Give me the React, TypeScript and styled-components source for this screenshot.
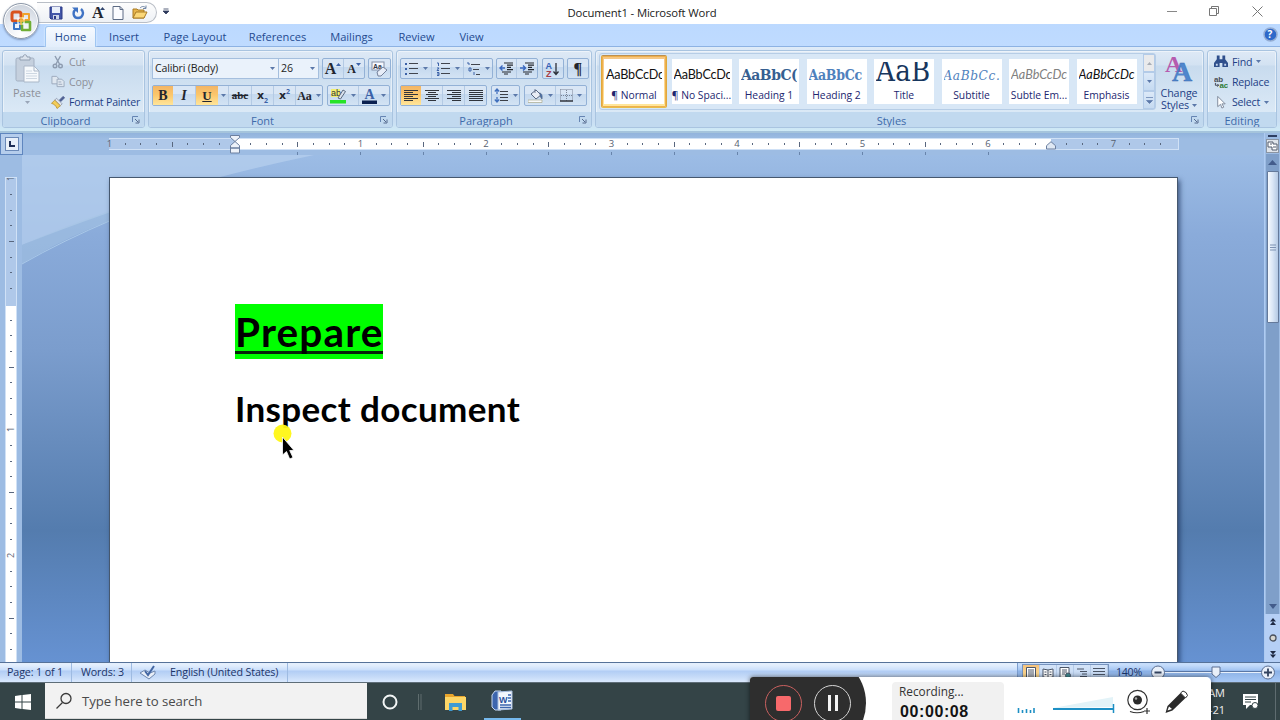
import type { ReactNode } from "react";
import styled, { createGlobalStyle, css } from "styled-components";

const GlobalStyle = createGlobalStyle`
  * {
    box-sizing: border-box;
  }
  body {
    margin: 0;
    overflow: hidden;
    font-family: "Open Sans", "Noto Sans", sans-serif;
    font-size: 11px;
    color: #15428b;
  }
`;

const Screen = styled.div`
  position: relative;
  width: 1280px;
  height: 720px;
  overflow: hidden;
  display: flex;
  flex-direction: column;
  background: #ffffff;
`;

const Row = styled.div<{ $gap?: number }>`
  display: flex;
  align-items: center;
  gap: ${(p) => p.$gap ?? 0}px;
`;

/* title bar */

const TitleBar = styled.header`
  height: 24px;
  flex: none;
  display: grid;
  grid-template-columns: 180px 1fr 180px;
  background: #ffffff;
`;

const QuickAccess = styled.div`
  display: flex;
  align-items: center;
  margin: 2px 0 1px 37px;
  width: 120px;
  height: 21px;
  padding-left: 12px;
  gap: 7.5px;
  border: 1px solid #b9bec6;
  border-left: 0;
  border-radius: 0 11px 11px 0;
  background: linear-gradient(#fdfdfd, #eef1f5);
`;

const QuickArea = styled.div`
  display: flex;
  align-items: flex-start;
`;

const QuickMore = styled.div`
  margin: 8px 0 0 6px;
  line-height: 0;
`;

const Title = styled.h1`
  margin: 0 0 0 4px;
  padding-top: 1px;
  text-align: center;
  font-size: 11.3px;
  letter-spacing: -0.14px;
  font-weight: 400;
  line-height: 24px;
  color: #1a1a1a;
`;

const WindowButtons = styled.div`
  display: flex;
  justify-content: flex-end;
  gap: 32px;
  padding: 6px 17px 0 0;
`;

const OfficeButton = styled.div`
  position: absolute;
  left: 3px;
  top: 3px;
  width: 36px;
  height: 36px;
  border-radius: 50%;
  border: 1px solid #8d98a8;
  background: radial-gradient(circle at 50% 90%, #ffffff 0, #e9edf3 45%, #c3cad5 100%);
  box-shadow: inset 0 0 0 1px #ffffff, 0 1px 2px rgba(60, 80, 120, 0.5);
  display: flex;
  align-items: center;
  justify-content: center;
`;

/* tabs */

const TabBar = styled.nav`
  height: 23px;
  flex: none;
  display: flex;
  background: linear-gradient(#bcd9ff, #bfdbff);
  padding-left: 45px;
  border-bottom: 1px solid #8db2e3;
`;

const Tab = styled.a<{ $active?: boolean; $w: number }>`
  width: ${(p) => p.$w}px;
  height: 23px;
  padding-top: 3px;
  line-height: 20px;
  text-align: center;
  font-size: 11.1px;
  color: #244a8f;
  ${(p) =>
    p.$active &&
    css`
      margin-top: 2px;
      height: 21px;
      padding-top: 0;
      border: 1px solid #9fc6f2;
      border-bottom: 0;
      border-radius: 3px 3px 0 0;
      background: linear-gradient(#f6faff, #e3eefb);
      box-shadow: 0 0 2px #f3ffff;
    `}
`;

const Help = styled.div`
  margin: 3px 2px 0 auto;
`;

/* ribbon */

const Ribbon = styled.section`
  height: 86px;
  flex: none;
  display: flex;
  gap: 3px;
  padding: 3px 3px 5px 2px;
  background: linear-gradient(#dfebf8 0, #cfdff1 18px, #c9def3 74px, #cfeaf6 84px);
  border-bottom: 2px solid #a5c4dc;
`;

const Group = styled.div<{ $w: number }>`
  width: ${(p) => p.$w}px;
  height: 78px;
  flex: none;
  display: flex;
  flex-direction: column;
  border: 1px solid #a9c4e0;
  border-radius: 3px;
  overflow: hidden;
  background: linear-gradient(#dee9f6 0, #d3e2f2 14px, #c8dbee 15px, #dbe9f6 62px);
  box-shadow: inset 0 0 0 1px rgba(255, 255, 255, 0.45);
`;

const GroupBody = styled.div<{ $pad?: number }>`
  flex: 1;
  min-height: 0;
  display: flex;
  padding-left: ${(p) => p.$pad ?? 0}px;
`;

const GroupLabel = styled.div<{ $launcher?: boolean }>`
  position: relative;
  height: 15px;
  flex: none;
  padding-right: ${(p) => (p.$launcher ? 16 : 0)}px;
  text-align: center;
  line-height: 17px;
  color: #3e6aaa;
  background: #c1d9ef;
`;

const Launcher = styled.span`
  position: absolute;
  right: 4px;
  top: 4px;
  line-height: 0;
`;

const PasteButton = styled.div`
  width: 48px;
  display: flex;
  flex-direction: column;
  align-items: center;
  padding-top: 3px;
  line-height: 17px;
  color: #8d9099;
`;

const CommandList = styled.div`
  display: flex;
  flex-direction: column;
`;

const Command = styled.div<{ $muted?: boolean }>`
  display: flex;
  align-items: center;
  height: 20.5px;
  gap: 4px;
  padding-top: 1px;
  white-space: nowrap;
  font-size: 10.6px;
  letter-spacing: -0.2px;
  color: ${(p) => (p.$muted ? "#8d9099" : "#1e3f86")};
`;

const ToolRows = styled.div`
  display: flex;
  flex-direction: column;
  gap: 7px;
  padding: 7px 0 0 3px;
`;

const ToolRow = styled.div<{ $gap?: number }>`
  display: flex;
  height: 20px;
  gap: ${(p) => p.$gap ?? 4}px;
`;

const ToolSet = styled.div<{ $w: number }>`
  width: ${(p) => p.$w}px;
  height: 21px;
  display: flex;
  border: 1px solid #93b1d6;
  border-radius: 2px;
  background: linear-gradient(#d9e6f5 0 40%, #c4d8ee 41%, #d3e3f4);
`;

const Tool = styled.div<{ $w: number; $on?: boolean; $line?: boolean }>`
  width: ${(p) => p.$w}px;
  flex: none;
  display: flex;
  align-items: center;
  justify-content: center;
  gap: 4px;
  border-right: ${(p) => (p.$line ? "1px solid #b4cae4" : 0)};
  background: ${(p) => (p.$on ? "linear-gradient(#f3b565, #fbc66b 45%, #ffe59a)" : "none")};
`;

const Glyph = styled.span<{ $size?: number; $italic?: boolean }>`
  font-family: "Liberation Serif", "DejaVu Serif", serif;
  font-size: ${(p) => p.$size ?? 14}px;
  font-style: ${(p) => (p.$italic ? "italic" : "normal")};
  font-weight: 700;
  line-height: 1;
  color: #23262e;
  white-space: nowrap;
`;

const SizeArrow = styled.svg`
  margin: 0 0 9px -4px;
`;

const ScriptBase = styled.span`
  font-family: "DejaVu Sans", sans-serif;
  font-size: 11px;
  font-weight: 700;
  line-height: 1;
  color: #23262e;
`;

const Script = styled.span<{ $up?: boolean }>`
  font-size: 7px;
  line-height: 1;
  font-weight: 700;
  color: #3c62a8;
  margin: ${(p) => (p.$up ? "0 0 9px -4px" : "9px 0 0 -4px")};
`;

const Combo = styled.div<{ $w: number }>`
  width: ${(p) => p.$w}px;
  height: 21px;
  display: flex;
  align-items: center;
  justify-content: space-between;
  padding: 0 3px 0 2px;
  border: 1px solid #a5bfde;
  background: #eaf2fb;
  color: #222222;
  font-size: 10.6px;
  letter-spacing: -0.17px;
  & + & {
    border-left: 0;
  }
`;

/* styles gallery */

const Gallery = styled.div`
  display: flex;
  width: 557px;
  height: 57px;
  flex: none;
  margin: 2px 0 0 3px;
  border: 1px solid #b6cde6;
  border-radius: 3px;
  background: #d8e7f6;
`;

const StyleCards = styled.div`
  display: flex;
  gap: 1.5px;
  padding-left: 1px;
  width: 543px;
`;

const StyleCard = styled.div<{ $on?: boolean }>`
  width: 66px;
  height: 53px;
  margin-top: 1px;
  padding: 3px 2px;
  border: 1px solid transparent;
  flex: none;
  ${(p) =>
    p.$on &&
    css`
      border-color: #bd8f4f #dfa93c #e6bd4a;
      border-radius: 2px;
      background: linear-gradient(#f5c684, #ffe79b);
      box-shadow: inset 0 0 0 1px #efb04d;
    `}
`;

const CardFace = styled.div`
  height: 45px;
  width: 60px;
  background: #ffffff;
  display: flex;
  flex-direction: column;
  align-items: center;
`;

type SampleProps = { $serif?: boolean; $bold?: boolean; $italic?: boolean; $size: number; $color: string; $ls?: number; $lh?: number };

const Sample = styled.div<SampleProps>`
  width: 56px;
  height: 27px;
  margin-top: 3px;
  overflow: hidden;
  white-space: nowrap;
  line-height: ${(p) => p.$lh ?? 26}px;
  font-family: ${(p) => (p.$serif ? '"DejaVu Serif Condensed", "DejaVu Serif", serif' : "Lato, sans-serif")};
  font-stretch: ${(p) => (p.$serif ? "condensed" : "normal")};
  font-weight: ${(p) => (p.$bold ? 700 : 400)};
  font-style: ${(p) => (p.$italic ? "italic" : "normal")};
  font-size: ${(p) => p.$size}px;
  letter-spacing: ${(p) => p.$ls ?? 0}px;
  color: ${(p) => p.$color};
`;

const CardName = styled.div`
  font-size: 10.3px;
  line-height: 13px;
  white-space: nowrap;
  color: #22266f;
`;

const GalleryScroll = styled.div`
  width: 12px;
  display: grid;
  grid-template-rows: 18px 19px 18px;
`;

const GalleryScrollButton = styled.div<{ $off?: boolean }>`
  display: flex;
  align-items: center;
  justify-content: center;
  border: 1px solid #b3cbe8;
  background: ${(p) => (p.$off ? "#e9eaec" : "linear-gradient(#dce9f8, #c5daf1)")};
`;

const ChangeStyles = styled.div`
  width: 44px;
  margin-left: 1px;
  padding-top: 3px;
  display: flex;
  flex-direction: column;
  align-items: center;
  line-height: 12px;
  text-align: center;
  font-size: 10.7px;
  letter-spacing: -0.1px;
  color: #1e3f86;
  white-space: nowrap;
`;

const ChangeLabel = styled.span`
  margin-top: 5px;
`;

/* document area */

const Workspace = styled.main`
  height: 529px;
  flex: none;
  display: grid;
  grid-template-columns: 1264px 16px;
`;

const Editor = styled.div`
  display: grid;
  grid-template-rows: 22px 507px;
`;

const RulerBar = styled.div`
  display: flex;
  background: linear-gradient(#92b3dc, #9dbce3 6px);
`;

const TabSelector = styled.div`
  width: 23px;
  height: 22px;
  padding: 3px 4px;
  border: 1px solid #5f86bf;
  background: #b5cdec;
  margin-right: 86px;
`;

const TabSelectorFace = styled.div`
  width: 14px;
  height: 14px;
  border: 1px solid #6a89b8;
  background: #e9f0f9;
  display: flex;
  align-items: center;
  justify-content: center;
`;

const Ruler = styled.div`
  position: relative;
  width: 1070px;
  height: 12px;
  margin-top: 5px;
  border: 1px solid #d0e1f6;
  border-left: 0;
  background: linear-gradient(90deg, #afc8e9 126px, #ffffff 126px 942px, #afc8e9 942px);
`;

const RulerTicks = styled.div`
  display: flex;
  margin-left: -7.35px;
`;

const RulerTick = styled.span<{ $tab?: boolean }>`
  width: 15.7px;
  flex: none;
  height: 16px;
  line-height: 10px;
  display: flex;
  justify-content: center;
  font-size: 9.5px;
  color: #566070;
  background: ${(p) => (p.$tab ? "linear-gradient(#6884ab, #6884ab) 50% 100% / 1px 3px no-repeat" : "none")};
`;

const Dot = styled.i<{ $w?: number; $h?: number }>`
  width: ${(p) => p.$w ?? 1}px;
  height: ${(p) => p.$h ?? 2}px;
  background: #59677e;
  margin-top: ${(p) => 5 - (p.$h ?? 2) / 2}px;
`;

const IndentMarker = styled.div<{ $x: number; $y: number }>`
  position: absolute;
  left: ${(p) => p.$x}px;
  top: ${(p) => p.$y}px;
  line-height: 0;
`;

const Body = styled.div`
  display: grid;
  grid-template-columns: 22px 1fr;
`;

const SideRuler = styled.div`
  padding: 22px 5px 0;
  background: #9dbce3;
`;

const SideScale = styled.div`
  height: 485px;
  overflow: hidden;
  border: 1px solid #d0e1f6;
  border-bottom: 0;
  background: linear-gradient(#afc8e9 128px, #ffffff 128px);
`;

const SideTicks = styled.div`
  margin-top: -7px;
`;

const SideTick = styled.div`
  height: 15.7px;
  display: flex;
  align-items: center;
  justify-content: center;
  font-size: 9px;
  line-height: 9px;
  color: #566070;
  i {
    margin: 0;
  }
  span {
    transform: rotate(-90deg);
  }
`;

const Desk = styled.div`
  position: relative;
  overflow: hidden;
  padding: 22px 86px 0 87px;
  background: linear-gradient(#9cbce5 0, #8aabda 80px, #7b9dcd 195px, #547cae 375px, #6692d2 507px);
`;

const Waves = styled.svg`
  position: absolute;
  left: 0;
  top: 0;
`;

const Page = styled.article`
  position: relative;
  height: 490px;
  width: 1069px;
  border: 1px solid #46586f;
  background: #ffffff;
  box-shadow: 2px 3px 5px rgba(20, 40, 80, 0.65);
  padding: 126px 0 0 125px;
  font-family: Lato, "Open Sans", sans-serif;
  font-weight: 700;
  color: #000000;
`;

const Heading = styled.p`
  margin: 0;
  width: 148px;
  height: 55px;
  background: #00ff00;
  font-size: 40.5px;
  line-height: 56px;
  letter-spacing: 1.15px;
  white-space: nowrap;
`;

const HeadingText = styled.span`
  display: block;
  height: 50px;
  border-bottom: 3px solid #06250a;
`;

const Line = styled.p`
  margin: 26px 0 0;
  font-size: 35px;
  line-height: 46px;
  letter-spacing: 0.36px;
  white-space: nowrap;
`;

const Pointer = styled.svg`
  position: absolute;
  left: 272px;
  top: 423px;
`;

/* scroll bar */

const ScrollColumn = styled.aside`
  display: flex;
  flex-direction: column;
  align-items: center;
  background: #9dbce3;
  border-left: 1px solid #aecbf2;
`;

const SplitHandle = styled.div`
  width: 9px;
  height: 2px;
  margin-top: 2px;
  background: #2e3f62;
`;

const RulerToggle = styled.div`
  width: 13px;
  height: 14px;
  margin-top: 2px;
  border: 1px solid #8b95a3;
  background: #dfe4ea;
  line-height: 0;
`;

const Track = styled.div`
  width: 13px;
  height: 460px;
  margin-top: 1px;
  display: flex;
  flex-direction: column;
  align-items: center;
  justify-content: space-between;
  background: #7f9fc9;
`;

const ScrollThumb = styled.div`
  width: 12px;
  height: 152px;
  margin-bottom: auto;
  border: 1px solid #64799a;
  border-radius: 1px;
  background: linear-gradient(90deg, #f5f9fe, #dbe7f6 45%, #b4c9e4);
  display: flex;
  align-items: center;
  justify-content: center;
`;

const ArrowBox = styled.div<{ $h: number }>`
  height: ${(p) => p.$h}px;
  display: flex;
  align-items: center;
`;

const BrowseButtons = styled.div`
  width: 15px;
  flex: 1;
  display: flex;
  flex-direction: column;
  align-items: center;
  justify-content: space-around;
  background: #b5cff5;
`;

/* status bar */

const StatusBar = styled.footer`
  height: 20px;
  flex: none;
  display: flex;
  border-top: 1px solid #567299;
  background: linear-gradient(#e4effd 0 2px, #cbdffb 7px, #b1cdf5 8px, #c6dbf8 14px, #dae9fe);
  color: #1b3468;
  line-height: 19px;
  font-size: 10.7px;
`;

const StatusItem = styled.div<{ $w: number; $pad: number }>`
  width: ${(p) => p.$w}px;
  padding-left: ${(p) => p.$pad}px;
  white-space: nowrap;
  letter-spacing: -0.12px;
  border-right: 1px solid #9ebbe2;
`;

const StatusRight = styled.div`
  margin-left: auto;
  width: 263px;
  display: flex;
  border-left: 1px solid #7d9fd0;
  background: linear-gradient(#c6ddfb 0 2px, #a4c5f2 7px, #8bb1e6 8px, #a7c8f5);
`;

const ViewButtons = styled.div`
  display: flex;
  width: 87px;
  height: 18px;
  flex: none;
  margin: 1px 0 0 4px;
  border: 1px solid #7793bd;
  background: linear-gradient(#d5e4f8, #bcd3f1);
`;

const ViewButton = styled.div<{ $on?: boolean }>`
  width: 17px;
  display: flex;
  align-items: center;
  justify-content: center;
  border-right: 1px solid #b5cbe8;
  background: ${(p) => (p.$on ? "linear-gradient(#f5c27c, #ffe39a)" : "none")};
`;

const ZoomValue = styled.span`
  margin-left: 7px;
  width: 34px;
  flex: none;
  line-height: 18px;
  letter-spacing: -0.3px;
`;

const ZoomControl = styled.div`
  margin-top: 1px;
  line-height: 0;
`;

/* windows task bar */

const TaskBar = styled.div`
  height: 38px;
  flex: none;
  display: flex;
  background: #344447;
  border-top: 1px solid #5e6d78;
`;

const StartButton = styled.div`
  width: 45px;
  display: flex;
  align-items: center;
  justify-content: center;
`;

const SearchBox = styled.div`
  width: 322px;
  height: 36px;
  padding-left: 10px;
  display: flex;
  align-items: center;
  gap: 9px;
  background: #f2f2f2;
  border-bottom: 1px solid #d8d8d8;
  font-size: 13.2px;
  letter-spacing: -0.05px;
  color: #4a4a4a;
`;

const TaskButton = styled.div<{ $w: number; $open?: boolean }>`
  width: ${(p) => p.$w}px;
  height: 37px;
  display: flex;
  align-items: center;
  justify-content: center;
  border-bottom: ${(p) => (p.$open ? "2px solid #76b9ed" : 0)};
`;

const Clock = styled.div`
  margin-left: auto;
  width: 56px;
  padding-top: 2px;
  text-align: right;
  font-size: 11px;
  line-height: 16.5px;
  color: #f2f2f2;
`;

const ActionCenter = styled.div`
  width: 51px;
  display: flex;
  align-items: center;
  justify-content: center;
  border-right: 1px solid #5f6c70;
  margin-right: 4px;
`;

/* screen recorder panel */

const Recorder = styled.div`
  position: absolute;
  left: 750px;
  top: 677px;
  width: 461px;
  height: 43px;
  overflow: hidden;
  display: flex;
  background: #ffffff;
  border-radius: 3px 5px 0 0;
`;

const RecorderShadow = styled.div`
  position: absolute;
  left: 750px;
  top: 677px;
  width: 461px;
  height: 60px;
  border-radius: 3px;
  box-shadow: 0 0 5px rgba(0, 0, 0, 0.6);
`;

const RecorderButtons = styled.div`
  width: 116px;
  height: 100px;
  flex: none;
  margin-top: -24px;
  display: flex;
  align-items: center;
  gap: 12px;
  padding-left: 15px;
  border-radius: 0 50px 50px 0;
  background: #2e2e2e;
`;

const RoundButton = styled.div<{ $color: string }>`
  width: 37px;
  height: 37px;
  border: 1.5px solid ${(p) => p.$color};
  border-radius: 50%;
  display: flex;
  align-items: center;
  justify-content: center;
  gap: 4px;
`;

const StopSquare = styled.i`
  width: 15px;
  height: 15px;
  border-radius: 2px;
  background: #f7696b;
`;

const PauseBar = styled.i`
  width: 3px;
  height: 16px;
  background: #f4f4f4;
`;

const RecorderInfo = styled.div`
  width: 112px;
  height: 50px;
  flex: none;
  margin: 5px 0 0 26px;
  padding: 1px 0 0 7px;
  border-radius: 4px;
  background: #f1f1f1;
  color: #333333;
  font-size: 11.8px;
  line-height: 16px;
`;

const Timer = styled.div`
  margin-left: 1px;
  font-family: "Liberation Sans", Arial, sans-serif;
  font-weight: 700;
  font-size: 16px;
  letter-spacing: 0.6px;
  line-height: 25px;
  color: #141414;
`;

const RecorderTools = styled.div`
  padding-left: 13px;
  line-height: 0;
`;

const Down = ({ color = "#5b78a9" }: { color?: string }) => (
  <svg width="5" height="3" viewBox="0 0 5 3">
    <path d="M0 0h5L2.500 3z" fill={color} />
  </svg>
);

const Lines = ({ rows, w = 14 }: { rows: number[][]; w?: number }) => (
  <svg width={w} height="12" viewBox={`0 0 ${w} 12`}>
    {rows.map(([x, len], i) => (
      <path key={i} d={`M${x} ${i * 2 + 0.5}h${len}`} stroke="#30343c" strokeWidth="1" />
    ))}
  </svg>
);

const ListIcon = ({ kind }: { kind: "bullet" | "number" | "level" }) => (
  <svg width="15" height="14" viewBox="0 0 15 14">
    {kind === "bullet" && <path d="M1 2h2M1 7h2M1 12h2" stroke="#3c62a8" strokeWidth="2" />}
    {kind === "number" && <path d="M1 1h1.5v3M1 6h2L1 8.500h2M1 10.500h2v3H1M3 12H1" stroke="#3c62a8" fill="none" />}
    {kind === "level" && <path d="M1 1h2v2M3 6h2v3H3zM8 10v3" stroke="#3c62a8" fill="none" />}
    {kind === "level" ? (
      <path d="M5 2.500h9M7 7.500h6M10 12.500h4" stroke="#41454e" />
    ) : (
      <path d="M5 1.500h9M5 6.500h9M5 11.500h9" stroke="#41454e" strokeWidth="1.200" />
    )}
  </svg>
);

const IndentIcon = ({ right }: { right?: boolean }) => (
  <svg width="15" height="13" viewBox="0 0 15 13">
    <path d="M5 1h9M8 3.200h6M8 5.400h4M8 7.600h6M3 10h9M5 12h4" stroke="#24272d" strokeWidth="1.200" />
    <path d={right ? "M0 6h5M3 3.500L5.500 6 3 8.500" : "M1 6h5M3.500 3.500L1 6l2.500 2.500"} stroke="#3a68bf" strokeWidth="1.400" fill="none" />
  </svg>
);

const LauncherIcon = () => (
  <svg width="8" height="8" viewBox="0 0 8 8">
    <path d="M.5 6V.5H6" stroke="#6685b3" fill="none" />
    <path d="M3 3l3 3M7 3.500V7H3.500" stroke="#54698d" fill="none" />
  </svg>
);

const OfficeLogo = () => (
  <svg width="24" height="24" viewBox="0 0 24 24" fill="none" strokeLinejoin="round">
    <rect x="3" y="3" width="9" height="9" rx="2" stroke="#d9531e" strokeWidth="3" />
    <path d="M14 5h6v6h-6z" stroke="#f0a22c" strokeWidth="2" />
    <path d="M5 14h6v6H5z" stroke="#3b76c5" strokeWidth="2" />
    <path d="M13 13h8v8h-8z" stroke="#70ae35" strokeWidth="2.600" />
    <path d="M9 9h6v6H9z" stroke="#fff" strokeWidth="1.200" />
    <path d="M8 12h8M12 8v8" stroke="#f3bf46" strokeWidth="1.500" />
  </svg>
);

const SaveIcon = () => (
  <svg width="14" height="14" viewBox="0 0 14 14">
    <path d="M1 1h12v12H2l-1-1z" fill="#4356a8" stroke="#2d3a86" />
    <path d="M3 1h8v6H3z" fill="#e9effa" />
    <path d="M4 9h6v4H4z" fill="#cdd6e8" />
    <path d="M5 10h2v3H5z" fill="#2d3a86" />
  </svg>
);

const UndoIcon = () => (
  <svg width="14" height="14" viewBox="0 0 14 14" fill="none">
    <path d="M4.500 3.500C1.500 6 2 12 7 12s6.500-6 3-9" stroke="#3f73c4" strokeWidth="2.400" />
    <path d="M1 1.500h6v5.500z" fill="#3f73c4" />
  </svg>
);

const PageIcon = () => (
  <svg width="12" height="14" viewBox="0 0 12 14">
    <path d="M1 .5h7l3 3v10H1z" fill="#fbfcff" stroke="#5c6b84" />
    <path d="M8 .5v3h3" fill="none" stroke="#5c6b84" />
  </svg>
);

const FolderIcon = () => (
  <svg width="16" height="15" viewBox="0 0 16 15">
    <path d="M1 4h4l1 1h6v8H1z" fill="#e8b54b" stroke="#a87b25" />
    <path d="M1 13l3-6h11l-3 6z" fill="#fbd777" stroke="#a87b25" />
    <path d="M8 3c2-2 4-2 6 0M14 .5V3.500h-3" fill="none" stroke="#7389a6" />
  </svg>
);

const PasteIcon = () => (
  <svg width="26" height="30" viewBox="0 0 26 30">
    <rect x="2" y="4" width="18" height="23" rx="1.500" fill="#c5d0de" stroke="#a3b0c2" />
    <path d="M6 6V3h3c0-3 4-3 4 0h3v3z" fill="#dbe3ed" stroke="#929fb1" />
    <path d="M10 12h10l5 5v11H10z" fill="#f6f9fc" stroke="#aab7c8" />
    <path d="M20 12v5h5" fill="none" stroke="#aab7c8" />
    <path d="M12 17h6M12 19.500h11M12 22h11M12 24.500h11" stroke="#cdd7e2" />
  </svg>
);

const CutIcon = () => (
  <svg width="14" height="14" viewBox="0 0 14 14" fill="none" stroke="#8e9cb0" strokeWidth="1.400">
    <path d="M4 1l4.500 8M9.500 1L5 9" />
    <circle cx="4" cy="11" r="1.800" />
    <circle cx="9.500" cy="11" r="1.800" />
  </svg>
);

const CopyIcon = () => (
  <svg width="14" height="13" viewBox="0 0 15 13" fill="#dfe7f0" stroke="#9aa8bb">
    <path d="M1 1h5l2 2v6H1z" />
    <path d="M6.500 4h5l2.500 2.500V12H6.500z" />
    <path d="M8 7h3M8 9.500h4" />
  </svg>
);

const BrushIcon = () => (
  <svg width="14" height="14" viewBox="0 0 15 14">
    <path d="M9 5l4-4 1.500 1.500-4 4z" fill="#4d5f92" stroke="#4d5f92" />
    <path d="M6 3l6 6-2 2-6-6z" fill="#dfe4ec" stroke="#77839b" strokeWidth=".7" />
    <path d="M4 5L10 11 6.500 14C5 10.500 3 9 .5 8.500z" fill="#f3cd57" stroke="#b38a2d" strokeWidth=".8" />
  </svg>
);

const EraserIcon = () => (
  <svg width="17" height="16" viewBox="0 0 17 16">
    <rect x="1" y="1" width="12" height="8" fill="#f8faff" stroke="#8490a8" />
    <text x="2" y="7.500" fontSize="7" fontWeight="700" fill="#32394c" fontFamily="Liberation Sans">Aa</text>
    <path d="M6 11l6-5 4 3-6 6H7z" fill="#e7edf8" stroke="#75819b" />
  </svg>
);

const HighlightIcon = () => (
  <svg width="17" height="16" viewBox="0 0 17 16">
    <path d="M1 1h9v8H1z" fill="#f2f071" />
    <text x="1" y="8" fontSize="9" fill="#33363c" fontFamily="Liberation Sans">ab</text>
    <path d="M8 10l5-8 2.500 1.500-5 7.500z" fill="#dae2ed" stroke="#5b6a80" />
    <path d="M0 12h16v3.500H0z" fill="#27e427" />
  </svg>
);

const FontColorIcon = () => (
  <svg width="15" height="16" viewBox="0 0 15 16">
    <text x="2.500" y="11" fontSize="14" fontWeight="700" fill="#3c62a8" fontFamily="Liberation Serif">A</text>
    <path d="M0 12.500h15V16H0z" fill="#0a2050" />
  </svg>
);

const SortIcon = () => (
  <svg width="15" height="16" viewBox="0 0 15 16">
    <text x="0.500" y="7.500" fontSize="9" fontWeight="700" fill="#3560b5" fontFamily="Liberation Sans">A</text>
    <text x="1" y="15.500" fontSize="9" fontWeight="700" fill="#a53c47" fontFamily="Liberation Sans">Z</text>
    <path d="M11 2v11M8.500 10.500L11 13.500l2.500-3" stroke="#2b2f38" strokeWidth="1.300" fill="none" />
  </svg>
);

const SpacingIcon = () => (
  <svg width="15" height="15" viewBox="0 0 15 15">
    <path d="M3 1v5M3 9v5M.8 3.500L3 1l2.200 2.500M.8 11.500L3 14l2.200-2.500" stroke="#4170bd" strokeWidth="1.300" fill="none" />
    <path d="M6 3.500h8M6 6.500h8M6 9.500h8M6 12.500h8" stroke="#3c4048" />
  </svg>
);

const BucketIcon = () => (
  <svg width="16" height="15" viewBox="0 0 16 15">
    <path d="M3 6l5-4 5 5-5 4z" fill="#e8edf5" stroke="#586883" />
    <path d="M7 5V1M11 5c4 0 3 5 3 6-1-1-2-3-2-5" fill="#3f6fb7" stroke="#586883" strokeWidth=".8" />
    <path d="M0 12h14v2.500H0z" fill="#f9fafc" stroke="#a9a98d" strokeWidth=".7" />
  </svg>
);

const BorderIcon = () => (
  <svg width="13" height="13" viewBox="0 0 13 13" fill="none">
    <path d="M.5.500h12v11M.5.500v11M6.500 1v11M1 6.500h11" stroke="#7a8496" strokeDasharray="1 1" />
    <path d="M0 12h13" stroke="#30343c" strokeWidth="1.500" />
  </svg>
);

const ChangeStylesIcon = () => (
  <svg width="30" height="28" viewBox="0 0 30 28" fontFamily="Liberation Serif" fontWeight="700">
    <text x="1" y="18" fontSize="24" fill="#b65bae">A</text>
    <text x="8" y="27" fontSize="28" fill="#4f86cd" stroke="#3a6bb0" strokeWidth=".4">A</text>
  </svg>
);

const FindIcon = () => (
  <svg width="14" height="13" viewBox="0 0 15 13" fill="#2f4f8c">
    <path d="M3 0h3v4h3V0h3v4l3 4v4.500H9V8H6v4.500H0V8l3-4z" />
    <path d="M2 9h2v2H2zM11 9h2v2h-2z" fill="#c7d8ef" />
  </svg>
);

const ReplaceIcon = () => (
  <svg width="14" height="14" viewBox="0 0 15 14" fontFamily="Liberation Sans" fontWeight="700">
    <text x="0" y="6.500" fontSize="8.500" fill="#4a4e57">ab</text>
    <text x="6" y="13.500" fontSize="8.500" fill="#2f7b35">ac</text>
    <path d="M1.500 8v2.500H5M3.500 9L5 10.500 3.500 12" fill="none" stroke="#3d4250" />
  </svg>
);

const SelectIcon = () => (
  <svg width="14" height="14" viewBox="0 0 15 14">
    <path d="M4 1v11l3-2.500 1.500 4 2-1L8.500 9H12z" fill="#fff" stroke="#7b8799" />
  </svg>
);

const WordIcon = () => (
  <svg width="23" height="22" viewBox="0 0 23 22">
    <path d="M4 1h6v19H4L1 17V5z" fill="#3d66ae" stroke="#c7d8f1" />
    <path d="M7 2l14-1v18l-14 1z" fill="#f3f7fd" stroke="#a6bddf" />
    <text x="8" y="12.500" fontSize="9" fontWeight="700" fill="#2c519b" fontFamily="Liberation Sans">W</text>
    <path d="M17 5h3M17 8h3M17 11h3M9 15h11M9 17.500h11" stroke="#3d66ae" strokeWidth="1.400" />
  </svg>
);

const TaskFolder = () => (
  <svg width="21" height="18" viewBox="0 0 21 18">
    <path d="M0 1h8l1.500 2H20v14H0z" fill="#e9a52c" />
    <path d="M0 4h21v13H0z" fill="#fdd667" />
    <path d="M4 10h13v8h-3.500v-4h-6v4H4z" fill="#3f9bd3" />
  </svg>
);

const ViewIcon = ({ n }: { n: number }) => (
  <svg width="12" height="12" viewBox="0 0 12 12" fill="none" stroke="#4b5566">
    {n === 0 && <path d="M1.500.500h9v11h-9zM3 3h6M3 5h6M3 7h6M3 9h6" fill="#fff" />}
    {n === 1 && <path d="M1 2l5 1 5-1v8l-5 1-5-1zM6 3v8M2.500 5h2M7.500 5h2M2.500 7.500h2M7.500 7.500h2" fill="#fff" />}
    {n === 2 && <path d="M1 .5h9v10H1zM3 3h5M3 5h5M3 7h3" fill="#fff" />}
    {n === 2 && <circle cx="9" cy="8.500" r="2.500" fill="#408b92" />}
    {n === 3 && <path d="M1 2h7M4 4.500h7M6 7h5M4 9.500h7" />}
    {n === 4 && <path d="M0 1.500h12M0 4.500h12M0 7.500h12M0 10.500h12" />}
  </svg>
);

const cards = [
  { name: "¶ Normal", text: "AaBbCcDc", size: 12.6, color: "#111111", ls: -0.2 },
  { name: "¶ No Spaci...", text: "AaBbCcDc", size: 12.6, color: "#111111", ls: -0.2 },
  { name: "Heading 1", text: "AaBbC(", size: 15.5, color: "#365f91", serif: true, bold: true, ls: -0.5 },
  { name: "Heading 2", text: "AaBbCc", size: 14, color: "#4f81bd", serif: true, bold: true, ls: -0.3 },
  { name: "Title", text: "AaB", size: 29, color: "#17365d", serif: true, ls: 0.3, lh: 18 },
  { name: "Subtitle", text: "AaBbCc.", size: 13.5, color: "#4f81bd", serif: true, italic: true, ls: 0.6 },
  { name: "Subtle Em...", text: "AaBbCcDc", size: 12.6, color: "#808080", italic: true },
  { name: "Emphasis", text: "AaBbCcDc", size: 12.6, color: "#111111", italic: true },
];

const tabs: [string, number][] = [
  ["Home", 51],
  ["Insert", 56],
  ["Page Layout", 86],
  ["References", 79],
  ["Mailings", 69],
  ["Review", 61],
  ["View", 49],
];

type RibbonGroupProps = { name: string; w: number; pad?: number; launcher?: boolean; children: ReactNode };

function RibbonGroup({ name, w, pad, launcher, children }: RibbonGroupProps) {
  return (
    <Group $w={w}>
      <GroupBody $pad={pad}>{children}</GroupBody>
      <GroupLabel $launcher={launcher}>
        {name}
        {launcher && (
          <Launcher>
            <LauncherIcon />
          </Launcher>
        )}
      </GroupLabel>
    </Group>
  );
}

function ClipboardGroup() {
  return (
    <RibbonGroup name="Clipboard" w={143} launcher>
      <PasteButton>
        <PasteIcon />
        <span>Paste</span>
        <Down color="#9aa6b8" />
      </PasteButton>
      <CommandList>
        <Command $muted>
          <CutIcon /> Cut
        </Command>
        <Command $muted>
          <CopyIcon /> Copy
        </Command>
        <Command>
          <BrushIcon /> Format Painter
        </Command>
      </CommandList>
    </RibbonGroup>
  );
}

function FontGroup() {
  return (
    <RibbonGroup name="Font" w={245} launcher>
      <ToolRows>
        <ToolRow $gap={3}>
          <Row>
            <Combo $w={127}>
              Calibri (Body) <Down />
            </Combo>
            <Combo $w={40}>
              26 <Down />
            </Combo>
          </Row>
          <ToolSet $w={43}>
            <Tool $w={21} $line>
              <Glyph $size={16}>A</Glyph>
              <SizeArrow width="5" height="3">
                <path d="M0 3h5L2.500 0z" fill="#3c62a8" />
              </SizeArrow>
            </Tool>
            <Tool $w={20}>
              <Glyph $size={12}>A</Glyph>
              <SizeArrow width="5" height="3">
                <path d="M0 0h5L2.500 3z" fill="#3c62a8" />
              </SizeArrow>
            </Tool>
          </ToolSet>
          <ToolSet $w={23}>
            <Tool $w={21}>
              <EraserIcon />
            </Tool>
          </ToolSet>
        </ToolRow>
        <ToolRow>
          <ToolSet $w={171}>
            <Tool $w={20} $on>
              <Glyph>B</Glyph>
            </Tool>
            <Tool $w={23} $line>
              <Glyph $italic>I</Glyph>
            </Tool>
            <Tool $w={22} $on>
              <Glyph $size={13}>
                <u>U</u>
              </Glyph>
            </Tool>
            <Tool $w={11} $line>
              <Down />
            </Tool>
            <Tool $w={23} $line>
              <Glyph $size={11}>
                <s>abc</s>
              </Glyph>
            </Tool>
            <Tool $w={22} $line>
              <ScriptBase>x</ScriptBase>
              <Script>2</Script>
            </Tool>
            <Tool $w={22} $line>
              <ScriptBase>x</ScriptBase>
              <Script $up>2</Script>
            </Tool>
            <Tool $w={26}>
              <Glyph $size={12}>Aa</Glyph>
              <Down />
            </Tool>
          </ToolSet>
          <ToolSet $w={63}>
            <Tool $w={31} $line>
              <HighlightIcon />
              <Down />
            </Tool>
            <Tool $w={30}>
              <FontColorIcon />
              <Down />
            </Tool>
          </ToolSet>
        </ToolRow>
      </ToolRows>
    </RibbonGroup>
  );
}

function ParagraphGroup() {
  return (
    <RibbonGroup name="Paragraph" w={196} launcher>
      <ToolRows>
        <ToolRow $gap={3.3}>
          <ToolSet $w={93}>
            <Tool $w={31} $line>
              <ListIcon kind="bullet" />
              <Down />
            </Tool>
            <Tool $w={32} $line>
              <ListIcon kind="number" />
              <Down />
            </Tool>
            <Tool $w={28}>
              <ListIcon kind="level" />
              <Down />
            </Tool>
          </ToolSet>
          <ToolSet $w={42}>
            <Tool $w={20} $line>
              <IndentIcon />
            </Tool>
            <Tool $w={20}>
              <IndentIcon right />
            </Tool>
          </ToolSet>
          <ToolSet $w={22}>
            <Tool $w={20}>
              <SortIcon />
            </Tool>
          </ToolSet>
          <ToolSet $w={22}>
            <Tool $w={20}>
              <Glyph $size={16}>¶</Glyph>
            </Tool>
          </ToolSet>
        </ToolRow>
        <ToolRow>
          <ToolSet $w={87}>
            <Tool $w={20} $on>
              <Lines rows={[[0, 14], [0, 9], [0, 14], [0, 9], [0, 14], [0, 9]]} />
            </Tool>
            <Tool $w={22} $line>
              <Lines rows={[[0, 14], [3, 8], [1, 12], [3, 8], [0, 14], [3, 8]]} />
            </Tool>
            <Tool $w={22} $line>
              <Lines rows={[[0, 14], [5, 9], [0, 14], [5, 9], [0, 14], [5, 9]]} />
            </Tool>
            <Tool $w={21}>
              <Lines rows={[[0, 14], [0, 14], [0, 14], [0, 14], [0, 14], [0, 14]]} />
            </Tool>
          </ToolSet>
          <ToolSet $w={29}>
            <Tool $w={27}>
              <SpacingIcon />
              <Down />
            </Tool>
          </ToolSet>
          <ToolSet $w={63}>
            <Tool $w={31} $line>
              <BucketIcon />
              <Down />
            </Tool>
            <Tool $w={30}>
              <BorderIcon />
              <Down />
            </Tool>
          </ToolSet>
        </ToolRow>
      </ToolRows>
    </RibbonGroup>
  );
}

function StylesGroup() {
  return (
    <RibbonGroup name="Styles" w={609} launcher>
      <Gallery>
        <StyleCards>
          {cards.map((card, i) => (
            <StyleCard key={card.name} $on={i === 0}>
              <CardFace>
                <Sample
                  $serif={card.serif}
                  $bold={card.bold}
                  $italic={card.italic}
                  $size={card.size}
                  $color={card.color}
                  $ls={card.ls}
                  $lh={card.lh}
                >
                  {card.text}
                </Sample>
                <CardName>{card.name}</CardName>
              </CardFace>
            </StyleCard>
          ))}
        </StyleCards>
        <GalleryScroll>
          <GalleryScrollButton $off>
            <svg width="5" height="3">
              <path d="M0 3h5L2.500 0z" fill="#a8adb5" />
            </svg>
          </GalleryScrollButton>
          <GalleryScrollButton>
            <Down />
          </GalleryScrollButton>
          <GalleryScrollButton>
            <svg width="7" height="7">
              <path d="M0 .5h7M.5 3.500h6L3.500 6.500z" stroke="#5b78a9" fill="#5b78a9" strokeWidth=".7" />
            </svg>
          </GalleryScrollButton>
        </GalleryScroll>
      </Gallery>
      <ChangeStyles>
        <ChangeStylesIcon />
        <ChangeLabel>Change</ChangeLabel>
        <Row $gap={3}>
          Styles <Down />
        </Row>
      </ChangeStyles>
    </RibbonGroup>
  );
}

function EditingGroup() {
  return (
    <RibbonGroup name="Editing" w={70} pad={6}>
      <CommandList>
        <Command>
          <FindIcon /> Find <Down />
        </Command>
        <Command>
          <ReplaceIcon /> Replace
        </Command>
        <Command>
          <SelectIcon /> Select <Down />
        </Command>
      </CommandList>
    </RibbonGroup>
  );
}

function TopRuler() {
  return (
    <RulerBar>
      <TabSelector>
        <TabSelectorFace>
          <svg width="6" height="6">
            <path d="M1 0v5h5" stroke="#1f2f57" strokeWidth="2" fill="none" />
          </svg>
        </TabSelectorFace>
      </TabSelector>
      <Ruler>
        <RulerTicks>
          {Array.from({ length: 68 }, (_, k) => (
            <RulerTick key={k} $tab={k > 8 && k < 60 && k % 4 === 0}>
              {k % 8 === 0 ? (k === 8 ? "" : Math.abs(k / 8 - 1)) : k === 60 ? "" : <Dot $h={k % 4 === 0 ? 5 : 2} />}
            </RulerTick>
          ))}
        </RulerTicks>
        <IndentMarker $x={121} $y={-4}>
          <svg width="10" height="19" viewBox="0 0 10 19" fill="#edf2f9" stroke="#6b7f9f">
            <path d="M.5.500h9v2l-4.500 4-4.500-4zM5 6.500l4.500 4V13h-9v-2.500zM.5 13h9v5h-9z" />
          </svg>
        </IndentMarker>
        <IndentMarker $x={937} $y={2}>
          <svg width="10" height="9" viewBox="0 0 10 9" fill="#dfe8f4" stroke="#6b7f9f">
            <path d="M5 .700l4.500 4V8h-9V4.700z" />
          </svg>
        </IndentMarker>
      </Ruler>
    </RulerBar>
  );
}

function LeftRuler() {
  return (
    <SideRuler>
      <SideScale>
        <SideTicks>
          {Array.from({ length: 31 }, (_, k) => (
            <SideTick key={k}>
              {k % 8 === 0 ? k === 8 ? "" : <span>{Math.abs(k / 8 - 1)}</span> : <Dot $w={k % 4 === 0 ? 5 : 2} $h={1} />}
            </SideTick>
          ))}
        </SideTicks>
      </SideScale>
    </SideRuler>
  );
}

function ScrollBar() {
  return (
    <ScrollColumn>
      <SplitHandle />
      <RulerToggle>
        <svg width="11" height="12" viewBox="0 0 11 12" fill="#fff" stroke="#515b6c">
          <path d="M1 2h5v2h4v6H5V7H1zM3 4h2M6 7h3" />
        </svg>
      </RulerToggle>
      <Track>
        <ArrowBox $h={17}>
          <svg width="9" height="5">
            <path d="M0 5h9L4.500 0z" fill="#435c8b" />
          </svg>
        </ArrowBox>
        <ScrollThumb>
          <svg width="6" height="7">
            <path d="M0 1h6M0 3.500h6M0 6h6" stroke="#7f93b3" />
          </svg>
        </ScrollThumb>
        <ArrowBox $h={15}>
          <svg width="8" height="5">
            <path d="M0 0h8L4 5z" fill="#435c8b" />
          </svg>
        </ArrowBox>
      </Track>
      <BrowseButtons>
        <svg width="6" height="7">
          <path d="M0 3.500h6L3 0zM0 7h6L3 3.500z" fill="#1f2a44" />
        </svg>
        <svg width="8" height="8">
          <circle cx="4" cy="4" r="3" fill="#d6d6d0" stroke="#49505c" strokeWidth="1.300" />
        </svg>
        <svg width="6" height="7">
          <path d="M0 0h6L3 3.500zM0 3.500h6L3 7z" fill="#1f2a44" />
        </svg>
      </BrowseButtons>
    </ScrollColumn>
  );
}

export default function App() {
  return (
    <Screen>
      <GlobalStyle />
      <TitleBar>
        <QuickArea>
          <QuickAccess>
            <SaveIcon />
            <UndoIcon />
            <Row>
              <Glyph $size={16}>A</Glyph>
              <SizeArrow width="5" height="3">
                <path d="M0 3h5L2.500 0z" fill="#34466e" />
              </SizeArrow>
            </Row>
            <PageIcon />
            <FolderIcon />
          </QuickAccess>
          <QuickMore>
            <svg width="6" height="7">
              <path d="M.5 1h5M0 3h6L3 6z" fill="#2d3a5c" stroke="#2d3a5c" strokeWidth=".8" />
            </svg>
          </QuickMore>
        </QuickArea>
        <Title>Document1 - Microsoft Word</Title>
        <WindowButtons>
          <svg width="10" height="11">
            <path d="M0 5.500h10" stroke="#888" />
          </svg>
          <svg width="11" height="11" fill="none" stroke="#777">
            <path d="M.5 2.500h7v7h-7zM2.500 2.500v-2h7v7h-2" />
          </svg>
          <svg width="11" height="11" stroke="#777">
            <path d="M.5.500l10 10M10.500.500l-10 10" />
          </svg>
        </WindowButtons>
      </TitleBar>
      <TabBar>
        {tabs.map(([name, w], i) => (
          <Tab key={name} $w={w} $active={i === 0}>
            {name}
          </Tab>
        ))}
        <Help>
          <svg width="15" height="15" viewBox="0 0 15 15">
            <circle cx="7.500" cy="7.500" r="6.500" fill="#2e68c9" stroke="#95add3" strokeWidth="1.500" />
            <text x="4.500" y="11" fontSize="10" fontWeight="700" fill="#fff">?</text>
          </svg>
        </Help>
      </TabBar>
      <OfficeButton>
        <OfficeLogo />
      </OfficeButton>
      <Ribbon>
        <ClipboardGroup />
        <FontGroup />
        <ParagraphGroup />
        <StylesGroup />
        <EditingGroup />
      </Ribbon>
      <Workspace>
        <Editor>
          <TopRuler />
          <Body>
            <LeftRuler />
            <Desk>
              <Waves width="320" height="120" viewBox="0 0 320 120">
                <path d="M0 0h292Q160 28 86 58 40 74 0 90z" fill="#b5cfee" opacity=".75" />
                <path d="M0 90Q50 68 100 52L92 64Q40 84 0 109z" fill="#a6c4e4" opacity=".55" />
                <path d="M0 109Q40 86 92 64" stroke="#a9c8e8" fill="none" />
              </Waves>
              <Page>
                <Heading>
                  <HeadingText>Prepare</HeadingText>
                </Heading>
                <Line>Inspect document</Line>
              </Page>
            </Desk>
          </Body>
        </Editor>
        <ScrollBar />
      </Workspace>
      <StatusBar>
        <StatusItem $w={72} $pad={7}>
          Page: 1 of 1
        </StatusItem>
        <StatusItem $w={60} $pad={9}>
          Words: 3
        </StatusItem>
        <StatusItem $w={156} $pad={8}>
          <Row $gap={14}>
            <svg width="16" height="15" viewBox="0 0 16 15">
              <path d="M0 8l5-3 5 3 5-2v3l-6 5z" fill="#e9eff8" stroke="#6e86ad" />
              <path d="M5 6l3 4 6-9" fill="none" stroke="#4467a3" strokeWidth="2" />
            </svg>
            English (United States)
          </Row>
        </StatusItem>
        <StatusRight>
          <ViewButtons>
            {[0, 1, 2, 3, 4].map((n) => (
              <ViewButton key={n} $on={n === 0}>
                <ViewIcon n={n} />
              </ViewButton>
            ))}
          </ViewButtons>
          <ZoomValue>140%</ZoomValue>
          <ZoomControl>
            <svg width="126" height="17" viewBox="0 0 126 17">
              <path d="M15 8.500h97" stroke="#e7f0fc" />
              <path d="M15 7.500h97" stroke="#5a77a5" />
              <g fill="#e8eff9" stroke="#5b6f92">
                <circle cx="8" cy="8.500" r="6.500" />
                <circle cx="118" cy="8.500" r="6.500" />
                <path d="M62 3h8v7l-4 3.500L62 10z" />
              </g>
              <path d="M4.500 8.500h7M114 8.500h8M118 4.500v8" stroke="#33435f" strokeWidth="1.800" />
            </svg>
          </ZoomControl>
        </StatusRight>
      </StatusBar>
      <TaskBar>
        <StartButton>
          <svg width="16" height="16" viewBox="0 0 16 16" fill="#fff">
            <path d="M0 2l6.500-1v6.500H0zM7.500 1L16 0v7.500H7.500zM0 8.500h6.500V15L0 14zM7.500 8.500H16V16l-8.500-1z" />
          </svg>
        </StartButton>
        <SearchBox>
          <svg width="18" height="18" viewBox="0 0 18 18" fill="none" stroke="#3a3a3a" strokeWidth="1.300">
            <circle cx="11" cy="6.500" r="5" />
            <path d="M7.500 10.500L1.500 16.500" />
          </svg>
          Type here to search
        </SearchBox>
        <TaskButton $w={46}>
          <svg width="16" height="16">
            <circle cx="8" cy="8" r="6.500" fill="none" stroke="#f2f5f5" strokeWidth="2" />
          </svg>
        </TaskButton>
        <TaskButton $w={14}>
          <svg width="4" height="16">
            <path d="M.5 0v16M3 0v16" stroke="#6b7779" strokeWidth=".8" />
          </svg>
        </TaskButton>
        <TaskButton $w={57}>
          <TaskFolder />
        </TaskButton>
        <TaskButton $w={37} $open>
          <WordIcon />
        </TaskButton>
        <Clock>
          <div>AM</div>
          <div>-21</div>
        </Clock>
        <ActionCenter>
          <svg width="17" height="17" viewBox="0 0 17 17">
            <path d="M1 1h15v11H8l-4 4v-4H1z" fill="#fff" />
            <path d="M3 4h11M3 6.500h11M3 9h6" stroke="#344447" />
            <circle cx="13" cy="12.500" r="3" fill="#fff" stroke="#344447" />
          </svg>
        </ActionCenter>
      </TaskBar>
      <RecorderShadow />
      <Recorder>
        <RecorderButtons>
          <RoundButton $color="#c9605f">
            <StopSquare />
          </RoundButton>
          <RoundButton $color="#d5d5d5">
            <PauseBar />
            <PauseBar />
          </RoundButton>
        </RecorderButtons>
        <RecorderInfo>
          Recording...
          <Timer>00:00:08</Timer>
        </RecorderInfo>
        <RecorderTools>
          <svg width="190" height="43" viewBox="0 0 190 43">
            <path d="M1.500 36v-5M5.500 36v-3M9.500 36v-4M13.500 36v-3M17 36v-5" stroke="#1d8fc4" strokeWidth="1.600" />
            <path d="M36 31L96 20v10z" fill="#e3f3f8" />
            <path d="M36 32h61" stroke="#1d8fc4" strokeWidth="2" />
            <path d="M96.500 27v9" stroke="#1d8fc4" strokeWidth="1.500" />
            <circle cx="120.500" cy="23" r="9.700" fill="none" stroke="#333" strokeWidth="1.200" />
            <circle cx="120.500" cy="23" r="4.500" fill="#2b2b2b" />
            <circle cx="119" cy="21.500" r="1.200" fill="#aaa" />
            <path d="M113 34.500q7 2.500 14 0M127 34h6M130 31v6" stroke="#333" fill="none" strokeWidth="1.200" />
            <path d="M148.500 36l2-7 13-13 5 5-13 12.500z" fill="#2b2b2b" />
            <path d="M163.500 16l2.500-2q4 1 4.500 4.500L168.500 21z" fill="#fff" stroke="#2b2b2b" />
            <path d="M150.500 33.500l1.500-4 3 2.500z" fill="#fff" />
          </svg>
        </RecorderTools>
      </Recorder>
      <Pointer width="24" height="40" viewBox="0 0 24 40">
        <circle cx="10.500" cy="10.500" r="9" fill="#fff714" opacity=".95" />
        <path d="M10.500 14v18l4-3.500 3.200 7.500 3.300-1.500-3.300-7H22z" fill="#000" stroke="#fff" strokeWidth=".8" />
      </Pointer>
    </Screen>
  );
}
